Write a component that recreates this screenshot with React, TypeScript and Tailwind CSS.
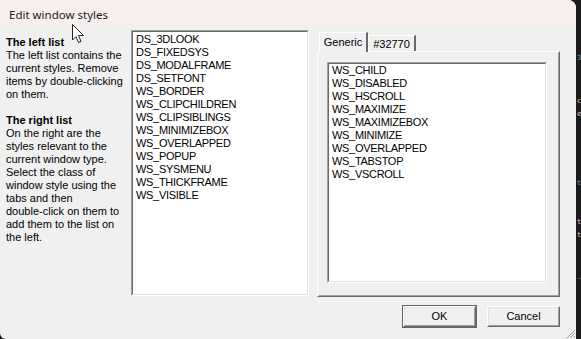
const leftStyles = [
  'DS_3DLOOK',
  'DS_FIXEDSYS',
  'DS_MODALFRAME',
  'DS_SETFONT',
  'WS_BORDER',
  'WS_CLIPCHILDREN',
  'WS_CLIPSIBLINGS',
  'WS_MINIMIZEBOX',
  'WS_OVERLAPPED',
  'WS_POPUP',
  'WS_SYSMENU',
  'WS_THICKFRAME',
  'WS_VISIBLE',
];

const rightStyles = [
  'WS_CHILD',
  'WS_DISABLED',
  'WS_HSCROLL',
  'WS_MAXIMIZE',
  'WS_MAXIMIZEBOX',
  'WS_MINIMIZE',
  'WS_OVERLAPPED',
  'WS_TABSTOP',
  'WS_VSCROLL',
];

const leftHelp = ['The left list contains the', 'current styles. Remove', 'items by double-clicking', 'on them.'];
const rightHelp = [
  'On the right are the',
  'styles relevant to the',
  'current window type.',
  'Select the class of',
  'window style using the',
  'tabs and then',
  'double-click on them to',
  'add them to the list on',
  'the left.',
];

// sunken listbox frame, classic win32 look
const ListBox = ({ items, className, pad }: { items: string[]; className: string; pad: string }) => (
  <div className={`border border-t-[#a0a0a0] border-l-[#a0a0a0] border-r-white border-b-white ${className}`}>
    <div className={`h-full border border-t-[#696969] border-l-[#696969] border-r-[#e3e3e3] border-b-[#e3e3e3] bg-white pl-[3px] ${pad}`}>
      {items.map((s) => (
        <div key={s} className="h-[13px] whitespace-nowrap tracking-[-0.3px]">
          {s}
        </div>
      ))}
    </div>
  </div>
);

const Button = ({ label, isDefault }: { label: string; isDefault?: boolean }) => (
  <div className={`h-[23px] w-[75px] border ${isDefault ? 'border-[#646464]' : 'border-transparent'}`}>
    <div className="h-full border border-t-white border-l-white border-r-[#696969] border-b-[#696969]">
      <div className="flex h-full items-center justify-center border border-t-[#e3e3e3] border-l-[#e3e3e3] border-r-[#a0a0a0] border-b-[#a0a0a0] bg-[#f0f0f0]">
        {label}
      </div>
    </div>
  </div>
);

export default function App() {
  return (
    <div className="flex h-[339px] w-[581px] overflow-hidden bg-[#1b1b1b] font-['Liberation_Sans',Arial,sans-serif] text-[11px] leading-[13px] text-black">
      {/* dialog window */}
      <div className="relative flex h-full w-[576px] shrink-0 flex-col overflow-hidden rounded-tr-[8px] rounded-bl-[6px] bg-[#f0f0f0]">
        <div className="flex h-[27px] items-center bg-[#f7efed] pl-[9px] pt-[2px] font-['Noto_Sans',sans-serif] text-[11.5px] text-[#1a1a1a]">
          Edit window styles
        </div>

        <div className="flex pt-[3px]">
          <div className="w-[131px] shrink-0 pl-[6px] pt-[6px]">
            <div className="font-bold">The left list</div>
            {leftHelp.map((l) => (
              <div key={l} className="whitespace-nowrap">
                {l}
              </div>
            ))}
            <div className="h-[13px]" />
            <div className="font-bold">The right list</div>
            {rightHelp.map((l) => (
              <div key={l} className="whitespace-nowrap">
                {l}
              </div>
            ))}
          </div>

          <ListBox items={leftStyles} className="h-[266px] w-[178px] shrink-0" pad="pt-[1px]" />

          {/* tab control */}
          <div className="ml-[8px] flex w-[243px] shrink-0 flex-col pt-[2px]">
            <div className="flex h-[19px] items-end">
              <div className="relative z-10 -mb-[1px] ml-[2px] flex h-[20px] w-[49px] justify-center border-l border-t border-r-2 border-l-white border-t-white border-r-[#696969] bg-[#f0f0f0] pt-[3px]">
                Generic
              </div>
              <div className="flex h-[16px] w-[48px] justify-center border-l border-t border-r-2 border-l-white border-t-white border-r-[#696969] pt-[2px]">
                #32770
              </div>
            </div>
            <div className="h-[246px] border border-t-white border-l-white border-r-[#696969] border-b-[#696969]">
              <div className="h-full border border-t-[#f0f0f0] border-l-[#f0f0f0] border-r-[#a0a0a0] border-b-[#a0a0a0] pl-[8px] pt-[9px]">
                <ListBox items={rightStyles} className="h-[221px] w-[220px]" pad="pt-0" />
              </div>
            </div>
          </div>
        </div>

        <div className="mt-[8px] flex justify-end gap-[9px] pr-[15px]">
          <Button label="OK" isDefault />
          <Button label="Cancel" />
        </div>

        {/* mouse pointer */}
        <svg className="absolute left-[72px] top-[24px]" width="13" height="20" viewBox="0 0 13 20">
          <path d="M0.5 0.5 L0.5 16 L4 12.5 L6.5 18.5 L9 17.5 L6.5 11.5 L11.5 11.5 Z" fill="white" stroke="#222" strokeWidth="1" />
        </svg>

        {/* resize grip */}
        <svg className="absolute bottom-0 right-0" width="11" height="11" viewBox="0 0 11 11">
          <path d="M10 2 L2 10 M10 5 L5 10 M10 8 L8 10" stroke="#a0a0a0" strokeWidth="1" />
        </svg>
      </div>

      {/* background editor peeking through */}
      <div className="flex flex-1 flex-col overflow-hidden pl-px font-['DejaVu_Sans_Mono',monospace] text-[7px] leading-[13px] text-[#cccccc]">
        <div className="mt-[52px] text-[#569cd6]">3</div>
        <div className="mt-[30px]">c</div>
        <div>e</div>
        <div className="mt-[56px] text-[#569cd6]">t</div>
        <div className="mt-[26px]">t</div>
        <div>t</div>
        <div className="mt-[36px] h-px bg-[#444]" />
      </div>
    </div>
  );
}
